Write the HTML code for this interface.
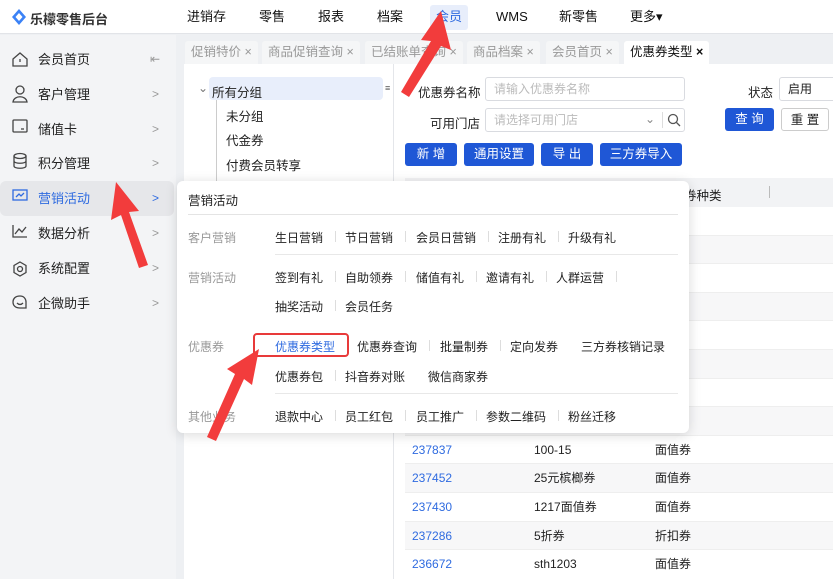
<!DOCTYPE html>
<html><head><meta charset="utf-8"><style>
*{box-sizing:border-box;margin:0;padding:0}
body{width:833px;height:579px;overflow:hidden;font-family:"Liberation Sans","Noto Sans CJK SC",sans-serif;font-size:12px;color:#222;background:#eef0f3;position:relative}
.abs{position:absolute}
.top{left:0;top:0;width:833px;height:34px;background:#fff;border-bottom:1px solid #e2e4e8}
.nav{top:0;height:34px;line-height:34px;font-size:13px;color:#111}
.side{left:0;top:35px;width:176px;height:544px;background:#f3f4f6}
.si{left:0;width:174px;height:35px;line-height:35px;font-size:13px;color:#222}
.si span{position:absolute;left:38px}
.si .ar{left:152px;color:#999;font-size:12px}
.tab{top:41px;height:23px;line-height:23px;background:#f5f6f7;color:#999;font-size:12.5px;padding:0 6px;border-radius:3px 3px 0 0}
.main{left:184px;top:64px;width:649px;height:515px;background:#fff}
.btn{height:23px;line-height:23px;background:#1f57d6;color:#fff;border-radius:3px;text-align:center;font-size:12.5px}
.inp{height:24px;border:1px solid #d9dbe0;border-radius:3px;color:#bbb;line-height:22px;padding-left:8px}
.row{left:405px;width:428px;height:28.6px;line-height:28.6px;font-size:12px}
.pop{left:177px;top:181px;width:512px;height:252px;background:#fff;border-radius:6px;box-shadow:0 2px 12px rgba(0,0,0,.15)}
.sep{width:1px;height:11px;background:#ddd}
.lbl{color:#999;font-size:12px}
</style></head><body>
<div class="abs top"></div>
<svg class="abs" style="left:12px;top:9px" width="14" height="16" viewBox="0 0 14 16"><path d="M7 0L14 8L7 16L0 8Z" fill="#3b82f6"/><path d="M7 4L10.5 8L7 12L3.5 8Z" fill="#fff"/></svg>
<div class="abs" style="left:30px;top:9px;font-size:13px;font-weight:bold;color:#333">乐檬零售后台</div>
<div class="abs nav" style="left:187px">进销存</div>
<div class="abs nav" style="left:259px">零售</div>
<div class="abs nav" style="left:318px">报表</div>
<div class="abs nav" style="left:377px">档案</div>
<div class="abs" style="left:430px;top:5px;width:38px;height:25px;background:#e8eefb;border-radius:3px"></div>
<div class="abs nav" style="left:436px;color:#2f6be0">会员</div>
<div class="abs nav" style="left:496px">WMS</div>
<div class="abs nav" style="left:559px">新零售</div>
<div class="abs nav" style="left:630px">更多▾</div>

<div class="abs side"></div>
<div class="abs si" style="top:42px"><span>会员首页</span><span class="ar" style="left:150px">⇤</span></div>
<div class="abs si" style="top:77px"><span>客户管理</span><span class="ar">&gt;</span></div>
<div class="abs si" style="top:112px"><span>储值卡</span><span class="ar">&gt;</span></div>
<div class="abs si" style="top:146px"><span>积分管理</span><span class="ar">&gt;</span></div>
<div class="abs si" style="top:181px;background:#e6e7ea;border-radius:6px;color:#2f6be0"><span>营销活动</span><span class="ar" style="color:#2f6be0">&gt;</span></div>
<div class="abs si" style="top:216px"><span>数据分析</span><span class="ar">&gt;</span></div>
<div class="abs si" style="top:251px"><span>系统配置</span><span class="ar">&gt;</span></div>
<div class="abs si" style="top:286px"><span>企微助手</span><span class="ar">&gt;</span></div>
<svg class="abs" style="left:11px;top:50px" width="18" height="260" viewBox="0 0 18 260" fill="none" stroke="#444" stroke-width="1.3">
<path d="M2 9L9 3L16 9V16H2Z"/><path d="M9 9V12"/>
<circle cx="9" cy="40" r="4"/><path d="M2 52C3 45 15 45 16 52Z"/>
<rect x="2" y="70" width="14" height="12" rx="1"/><path d="M10 79H13"/>
<ellipse cx="9" cy="106" rx="6" ry="2.5"/><path d="M3 106V116C3 119 15 119 15 116V106M3 111C3 114 15 114 15 111"/>
<rect x="2" y="140" width="14" height="10" stroke="#2f6be0"/><path d="M5 147L8 144L10 146L13 143" stroke="#2f6be0"/>
<path d="M2 175V187H16M4 184L8 179L11 182L15 177"/>
<path d="M9 212L15 215.5V222.5L9 226L3 222.5V215.5Z"/><circle cx="9" cy="219" r="2.5"/>
<path d="M9 246C4 246 2 249 2 252C2 256 5 258 9 258H15V252C15 249 13 246 9 246Z"/><path d="M6 253C8 255 10 255 12 253"/>
</svg>

<div class="abs tab" style="left:185px">促销特价 ×</div>
<div class="abs tab" style="left:262px">商品促销查询 ×</div>
<div class="abs tab" style="left:365px">已结账单查询 ×</div>
<div class="abs tab" style="left:467px">商品档案 ×</div>
<div class="abs tab" style="left:546px">会员首页 ×</div>
<div class="abs tab" style="left:624px;background:#fff;color:#111">优惠券类型 <b>×</b></div>

<div class="abs main"></div>
<div class="abs" style="left:393px;top:64px;width:1px;height:515px;background:#e4e6ea"></div>
<div class="abs" style="left:209px;top:77px;width:174px;height:23px;background:#e8eefb;border-radius:4px"></div>
<div class="abs" style="left:198px;top:81px;color:#777">⌄</div>
<div class="abs" style="left:212px;top:82px;font-size:12.5px">所有分组</div>
<div class="abs" style="left:216px;top:100px;width:1px;height:85px;background:#ccc"></div>
<div class="abs" style="left:226px;top:106px;font-size:12.5px">未分组</div>
<div class="abs" style="left:226px;top:130px;font-size:12.5px">代金券</div>
<div class="abs" style="left:226px;top:155px;font-size:12.5px">付费会员转享</div>
<div class="abs" style="left:385px;top:83px;font-size:9px;color:#555">≡</div>

<div class="abs" style="left:418px;top:82px;font-size:12.5px">优惠券名称</div>
<div class="abs inp" style="left:485px;top:77px;width:200px">请输入优惠券名称</div>
<div class="abs" style="left:748px;top:82px;font-size:12.5px">状态</div>
<div class="abs inp" style="left:779px;top:77px;width:60px;color:#222">启用</div>
<div class="abs" style="left:430px;top:113px;font-size:12.5px">可用门店</div>
<div class="abs inp" style="left:485px;top:108px;width:200px">请选择可用门店</div>
<div class="abs" style="left:645px;top:112px;color:#888">⌄</div>
<div class="abs" style="left:662px;top:112px;width:1px;height:16px;background:#ddd"></div>
<svg class="abs" style="left:667px;top:113px" width="14" height="14" fill="none" stroke="#555" stroke-width="1.3"><circle cx="6" cy="6" r="4.5"/><path d="M9.5 9.5L13 13"/></svg>
<div class="abs btn" style="left:725px;top:108px;width:49px">查 询</div>
<div class="abs btn" style="left:781px;top:108px;width:48px;background:#fff;color:#222;border:1px solid #ccc">重 置</div>
<div class="abs btn" style="left:405px;top:143px;width:52px">新 增</div>
<div class="abs btn" style="left:464px;top:143px;width:70px">通用设置</div>
<div class="abs btn" style="left:541px;top:143px;width:52px">导 出</div>
<div class="abs btn" style="left:600px;top:143px;width:82px">三方券导入</div>

<div class="abs" style="left:405px;top:178px;width:428px;height:29px;background:#f2f3f5"></div>
<div class="abs" style="left:684px;top:185px;font-size:12.5px">券种类</div>
<div class="abs" style="left:769px;top:186px;width:1px;height:12px;background:#bbb"></div>
<div class="abs row" style="top:207px;border-bottom:1px solid #eee"></div>
<div class="abs row" style="top:235.6px;background:#f7f7f8;border-bottom:1px solid #eee"></div>
<div class="abs row" style="top:264.2px;border-bottom:1px solid #eee"></div>
<div class="abs row" style="top:292.8px;background:#f7f7f8;border-bottom:1px solid #eee"></div>
<div class="abs row" style="top:321.4px;border-bottom:1px solid #eee"></div>
<div class="abs row" style="top:350px;background:#f7f7f8;border-bottom:1px solid #eee"></div>
<div class="abs row" style="top:378.6px;border-bottom:1px solid #eee"></div>
<div class="abs row" style="top:407.2px;background:#f7f7f8;border-bottom:1px solid #eee"></div>
<div class="abs row" style="top:435.8px;border-bottom:1px solid #eee"><span class="abs" style="left:7px;color:#2f6be0">237837</span><span class="abs" style="left:129px">100-15</span><span class="abs" style="left:250px">面值券</span></div>
<div class="abs row" style="top:464.4px;background:#f7f7f8;border-bottom:1px solid #eee"><span class="abs" style="left:7px;color:#2f6be0">237452</span><span class="abs" style="left:129px">25元槟榔券</span><span class="abs" style="left:250px">面值券</span></div>
<div class="abs row" style="top:493px;border-bottom:1px solid #eee"><span class="abs" style="left:7px;color:#2f6be0">237430</span><span class="abs" style="left:129px">1217面值券</span><span class="abs" style="left:250px">面值券</span></div>
<div class="abs row" style="top:521.6px;background:#f7f7f8;border-bottom:1px solid #eee"><span class="abs" style="left:7px;color:#2f6be0">237286</span><span class="abs" style="left:129px">5折券</span><span class="abs" style="left:250px">折扣券</span></div>
<div class="abs row" style="top:550.2px"><span class="abs" style="left:7px;color:#2f6be0">236672</span><span class="abs" style="left:129px">sth1203</span><span class="abs" style="left:250px">面值券</span></div>

<div class="abs pop"></div>
<div class="abs" style="left:188px;top:190px;font-size:12.5px">营销活动</div>
<div class="abs" style="left:188px;top:214px;width:490px;height:1px;background:#e4e4e4"></div>
<div class="abs lbl" style="left:188px;top:229px">客户营销</div>
<div class="abs lbl" style="left:188px;top:269px">营销活动</div>
<div class="abs lbl" style="left:188px;top:338px">优惠券</div>
<div class="abs lbl" style="left:188px;top:408px">其他业务</div>
<div class="abs" style="left:275px;top:254px;width:403px;height:1px;background:#e8e8e8"></div>
<div class="abs" style="left:275px;top:393px;width:403px;height:1px;background:#e8e8e8"></div>

<div class="abs" style="left:275px;top:229px">生日营销</div><div class="abs sep" style="left:335px;top:231px"></div>
<div class="abs" style="left:345px;top:229px">节日营销</div><div class="abs sep" style="left:405px;top:231px"></div>
<div class="abs" style="left:416px;top:229px">会员日营销</div><div class="abs sep" style="left:488px;top:231px"></div>
<div class="abs" style="left:498px;top:229px">注册有礼</div><div class="abs sep" style="left:558px;top:231px"></div>
<div class="abs" style="left:568px;top:229px">升级有礼</div>

<div class="abs" style="left:275px;top:269px">签到有礼</div><div class="abs sep" style="left:335px;top:271px"></div>
<div class="abs" style="left:345px;top:269px">自助领券</div><div class="abs sep" style="left:405px;top:271px"></div>
<div class="abs" style="left:416px;top:269px">储值有礼</div><div class="abs sep" style="left:476px;top:271px"></div>
<div class="abs" style="left:486px;top:269px">邀请有礼</div><div class="abs sep" style="left:546px;top:271px"></div>
<div class="abs" style="left:556px;top:269px">人群运营</div><div class="abs sep" style="left:616px;top:271px"></div>
<div class="abs" style="left:275px;top:298px">抽奖活动</div><div class="abs sep" style="left:335px;top:300px"></div>
<div class="abs" style="left:345px;top:298px">会员任务</div>

<div class="abs" style="left:253px;top:333px;width:96px;height:24px;border:2.5px solid #e83a3a;border-radius:4px"></div>
<div class="abs" style="left:275px;top:338px;color:#2f6be0">优惠券类型</div>
<div class="abs" style="left:357px;top:338px">优惠券查询</div><div class="abs sep" style="left:429px;top:340px"></div>
<div class="abs" style="left:440px;top:338px">批量制券</div><div class="abs sep" style="left:500px;top:340px"></div>
<div class="abs" style="left:510px;top:338px">定向发券</div>
<div class="abs" style="left:581px;top:338px">三方券核销记录</div>
<div class="abs" style="left:275px;top:368px">优惠券包</div><div class="abs sep" style="left:335px;top:370px"></div>
<div class="abs" style="left:345px;top:368px">抖音券对账</div>
<div class="abs" style="left:428px;top:368px">微信商家券</div>

<div class="abs" style="left:275px;top:408px">退款中心</div><div class="abs sep" style="left:335px;top:410px"></div>
<div class="abs" style="left:345px;top:408px">员工红包</div><div class="abs sep" style="left:405px;top:410px"></div>
<div class="abs" style="left:416px;top:408px">员工推广</div><div class="abs sep" style="left:476px;top:410px"></div>
<div class="abs" style="left:486px;top:408px">参数二维码</div><div class="abs sep" style="left:558px;top:410px"></div>
<div class="abs" style="left:568px;top:408px">粉丝迁移</div>

<svg class="abs" style="left:0;top:0" width="833" height="579">
<g fill="#f23c3c">
<polygon points="441,11 451,50 441,46 409,97 401,92 431,41 421,40"/>
<polygon points="116,182 139,211 129,212 148,265 139,268 121,215 111,220"/>
<polygon points="259,349 252,385 244,379 216,441 207,437 235,374 227,369"/>
</g>
</svg>
</body></html>
